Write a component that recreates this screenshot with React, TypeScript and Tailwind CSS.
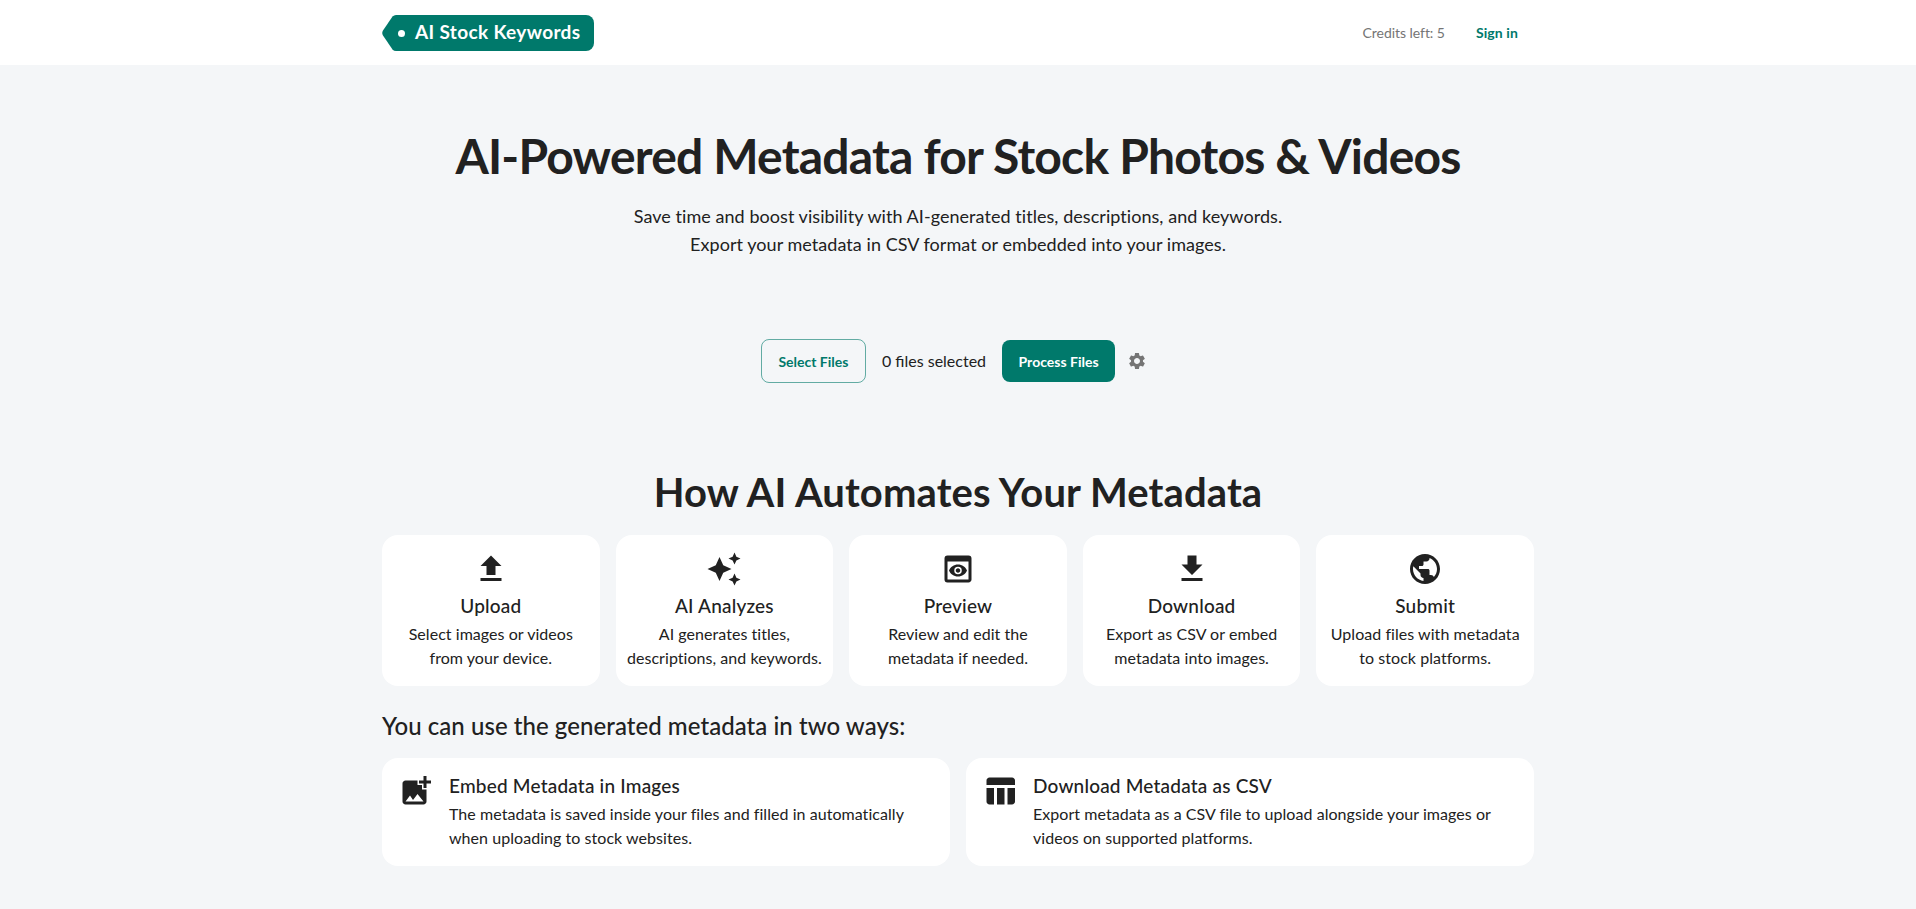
import {
  MdFileUpload,
  MdAutoAwesome,
  MdPreview,
  MdFileDownload,
  MdPublic,
  MdAddPhotoAlternate,
  MdTableChart,
  MdSettings,
} from "react-icons/md";

const steps = [
  { icon: MdFileUpload, title: "Upload", lines: ["Select images or videos", "from your device."] },
  { icon: MdAutoAwesome, title: "AI Analyzes", lines: ["AI generates titles,", "descriptions, and keywords."] },
  { icon: MdPreview, title: "Preview", lines: ["Review and edit the", "metadata if needed."] },
  { icon: MdFileDownload, title: "Download", lines: ["Export as CSV or embed", "metadata into images."] },
  { icon: MdPublic, title: "Submit", lines: ["Upload files with metadata", "to stock platforms."] },
];

const ways = [
  {
    icon: MdAddPhotoAlternate,
    title: "Embed Metadata in Images",
    lines: ["The metadata is saved inside your files and filled in automatically", "when uploading to stock websites."],
  },
  {
    icon: MdTableChart,
    title: "Download Metadata as CSV",
    lines: ["Export metadata as a CSV file to upload alongside your images or", "videos on supported platforms."],
  },
];

function Logo() {
  return (
    <div className="flex h-[36px] w-[212px] items-stretch">
      <svg width="16" height="36" viewBox="0 0 16 36" className="shrink-0">
        <path d="M16 0 L14 0 Q12 0 10.5 1.5 L1 15.5 Q-0.5 18 1 20.5 L10.5 34.5 Q12 36 14 36 L16 36 Z" fill="#00796b" />
      </svg>
      <div className="relative flex flex-1 items-center rounded-r-lg bg-[#00796b] pl-[17px] text-[19px] font-bold tracking-[0.35px] text-white">
        <span className="absolute left-[0px] top-[15px] h-[7px] w-[7px] rounded-full bg-white" />
        AI Stock Keywords
      </div>
    </div>
  );
}

export default function App() {
  return (
    <div className="min-h-[909px] bg-[#f4f6f8] font-['Lato','Liberation_Sans',sans-serif] text-[#212121]">
      <header className="h-[65px] bg-white">
        <div className="mx-auto flex h-full w-[1152px] items-center justify-between">
          <Logo />
          <div className="flex items-center gap-[31px] pr-4 text-[14px]">
            <span className="tracking-[-0.05px] text-[#757575]">Credits left: 5</span>
            <button className="font-bold tracking-[0.1px] text-[#00796b]">Sign in</button>
          </div>
        </div>
      </header>

      <main className="mx-auto w-[1152px]">
        <section className="pt-[58px] text-center">
          <h1 className="text-[48px] leading-[66px] font-bold tracking-[-0.8px]">
            AI-Powered Metadata for Stock Photos &amp; Videos
          </h1>
          <p className="mt-[13px] text-[18px] leading-[28px] tracking-[0.05px]">
            Save time and boost visibility with AI-generated titles, descriptions, and keywords.
            <br />
            Export your metadata in CSV format or embedded into your images.
          </p>
        </section>

        <section className="mt-[81px] flex items-center justify-center">
          <button className="h-[44px] w-[105px] rounded-lg border border-[#00796b]/60 text-[14px] font-bold text-[#00796b]">
            Select Files
          </button>
          <span className="ml-[16px] text-[16px]">0 files selected</span>
          <button className="ml-[16px] h-[42px] w-[113px] rounded-lg bg-[#00796b] text-[14px] font-bold text-white">
            Process Files
          </button>
          <MdSettings className="ml-[12px] mr-[8px] text-[#757575]" size={20} />
        </section>

        <h2 className="mt-[81px] text-center text-[40px] leading-[56px] font-bold tracking-[0.1px]">
          How AI Automates Your Metadata
        </h2>

        <section className="mt-[15px] grid grid-cols-5 gap-4">
          {steps.map((step) => (
            <div key={step.title} className="flex h-[151px] flex-col items-center rounded-2xl bg-white pt-[16px] text-center">
              <step.icon size={36} className="text-[#212121]" />
              <h3 className="mt-[5px] text-[19px] leading-[28px] font-medium tracking-[0.2px]">{step.title}</h3>
              <p className="mt-[2px] text-[16px] leading-[24px] tracking-[0.05px] whitespace-nowrap">
                {step.lines[0]}
                <br />
                {step.lines[1]}
              </p>
            </div>
          ))}
        </section>

        <h2 className="mt-[23px] text-[24px] leading-[34px] font-medium tracking-[0.05px]">
          You can use the generated metadata in two ways:
        </h2>

        <section className="mt-[15px] grid grid-cols-2 gap-4">
          {ways.map((way) => (
            <div key={way.title} className="flex h-[108px] items-start gap-[15px] rounded-2xl bg-white px-[16px] pt-[14px]">
              <way.icon size={36} className="mt-[1px] shrink-0 text-[#212121]" />
              <div>
                <h3 className="text-[19px] leading-[28px] font-medium tracking-[0.2px]">{way.title}</h3>
                <p className="mt-[2px] text-[16px] leading-[24px] tracking-[0.05px]">
                  {way.lines[0]}
                  <br />
                  {way.lines[1]}
                </p>
              </div>
            </div>
          ))}
        </section>
      </main>
    </div>
  );
}
